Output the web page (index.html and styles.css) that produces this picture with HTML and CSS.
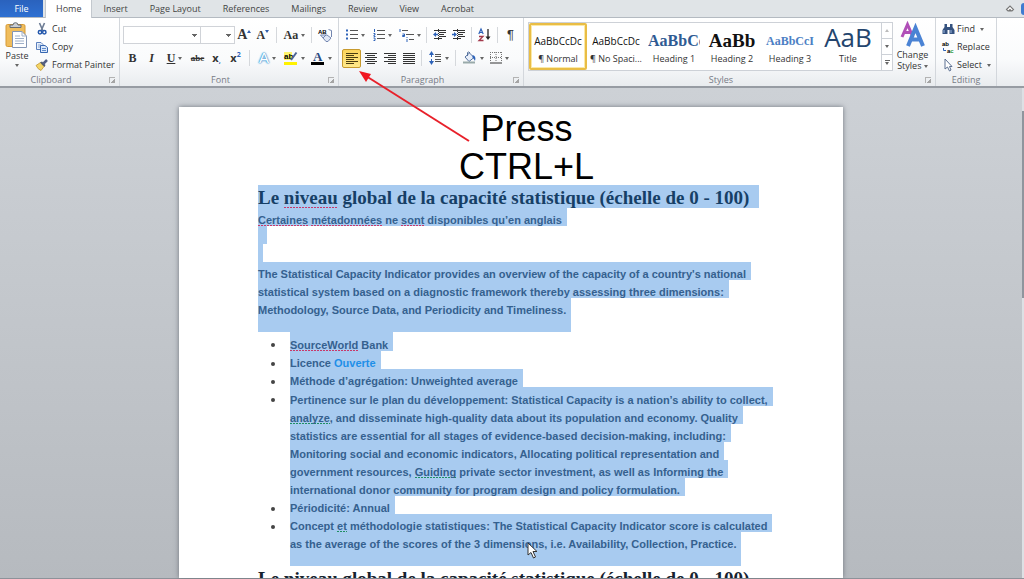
FILE: index.html
```html
<!DOCTYPE html>
<html lang="en">

<head>
  <meta charset="UTF-8">
  <meta name="viewport" content="width=device-width, initial-scale=1.0">
  <title>Align text left</title>
  <link rel="stylesheet" href="styles.css">
</head>

<body>
  <nav class="tabs">
    <button class="tab file">File</button>
    <button class="tab active">Home</button>
    <button class="tab">Insert</button>
    <button class="tab">Page Layout</button>
    <button class="tab">References</button>
    <button class="tab">Mailings</button>
    <button class="tab">Review</button>
    <button class="tab">View</button>
    <button class="tab">Acrobat</button>
    <div class="tabs-end">
      <button class="collapse" aria-label="Minimize the ribbon">
        <svg width="10" height="10" viewBox="0 0 10 10"><path d="M1.5 5.5 L5 2 L8.500 5.500 L7 7 H3 Z M3.500 7 L5 5.500 L6.500 7" fill="#fff" stroke="#777" stroke-width="1.100"/></svg>
      </button>
      <button class="help" aria-label="Help"></button>
    </div>
  </nav>

  <div class="ribbon">
    <section class="group clipboard">
      <div class="group-body">
        <button class="big">
          <svg width="24" height="27" viewBox="0 0 24 27">
            <rect x="1" y="2.500" width="19" height="22" rx="1.500" fill="#f0bd5c" stroke="#d79a35"/>
            <path d="M5 5.500 V3 H8 Q8 .7 10.500 .7 T13 3 H16 V5.500 Z" fill="#c9cdd2" stroke="#666c75"/>
            <path d="M7.500 9.500 H17 L21.500 14 V25.500 H7.500 Z" fill="#fff" stroke="#8496b5"/>
            <path d="M17 9.500 V14 H21.500 M10 14 H15 M10 16.500 H19 M10 19 H19 M10 21.500 H19" fill="none" stroke="#9fb0c9"/>
          </svg>
          <span>Paste</span>
          <i class="caret"></i>
        </button>
        <div class="stack">
          <button class="item">
            <svg width="12" height="12" viewBox="0 0 12 12"><path d="M3.500 0 L7 8 M8.500 0 L5 8" stroke="#6d7c94" stroke-width="1.600"/><circle cx="4" cy="9.300" r="1.700" fill="none" stroke="#2458ad" stroke-width="1.500"/><circle cx="8.300" cy="9.300" r="1.700" fill="none" stroke="#2458ad" stroke-width="1.500"/></svg>
            Cut
          </button>
          <button class="item">
            <svg width="12" height="12" viewBox="0 0 12 12"><path d="M.5 1.500 H5 L7 3.500 V8.500 H.5 Z" fill="#e8f0fb" stroke="#5c80bd"/><path d="M2 4 H5 M2 6 H5" stroke="#86a5d5"/><path d="M4.500 4.500 H9 L11.500 6.500 V11.500 H4.500 Z" fill="#dbe8fa" stroke="#3767b1"/><path d="M6 7.500 H10 M6 9.500 H10" stroke="#5f8bcb"/></svg>
            Copy
          </button>
          <button class="item">
            <svg width="12" height="12" viewBox="0 0 12 12"><path d="M0 6.500 L4.500 3.500 L8 7.500 L5 11.500 Q2 10.500 0 6.500" fill="#f4d566" stroke="#b98c25" stroke-width=".7"/><path d="M4 3.500 L8.500 8 L9.500 6 L6 2.500Z" fill="#555e70"/><path d="M7.500 4.500 L11 1" stroke="#535f85" stroke-width="2.500"/></svg>
            Format Painter
          </button>
        </div>
      </div>
      <footer><span>Clipboard</span><button class="launcher" aria-label="Clipboard options"></button></footer>
    </section>

    <section class="group font">
      <div class="group-body rows">
        <div class="row">
          <select class="combo family" aria-label="Font"><option></option></select>
          <select class="combo size" aria-label="Font size"><option></option></select>
          <button class="tool serif grow">A<svg width="4" height="9" viewBox="0 0 4 9"><path d="M0 3 L2 0 L4 3Z" fill="#2f5fae"/></svg></button>
          <button class="tool serif shrink">A<svg width="4" height="9" viewBox="0 0 4 9"><path d="M0 0 L2 3 L4 0Z" fill="#2f5fae"/></svg></button>
          <i class="sep"></i>
          <button class="split serif">Aa<i class="caret"></i></button>
          <i class="sep"></i>
          <button class="tool" aria-label="Clear formatting">
            <svg width="15" height="15" viewBox="0 0 15 15"><text x="0" y="6" class="tiny">AB</text><path d="M2.500 7 L9 7 L13 10 L10 13.500 H8 L5 10 Z" fill="#dfe6f4" stroke="#7386b0"/><path d="M5 10 L8 7 M10.500 1.500 L13.500 2.500 V9" fill="none" stroke="#7386b0"/></svg>
          </button>
        </div>
        <div class="row">
          <button class="tool serif"><b>B</b></button>
          <button class="tool serif"><em>I</em></button>
          <button class="split serif"><u>U</u><i class="caret"></i></button>
          <button class="tool serif small"><s>abc</s></button>
          <button class="tool sub">x<span>,</span></button>
          <button class="tool sup">x<span>2</span></button>
          <i class="sep"></i>
          <button class="split effects">A<i class="caret"></i></button>
          <button class="split" aria-label="Highlight colour">
            <svg width="14" height="15" viewBox="0 0 14 15"><rect y="11" width="13" height="3" fill="#fff200"/><rect y="1" width="8" height="8" fill="#fff56b"/><text x="0" y="8" class="mark">ab</text><path d="M7 9 L12.500 1.500" stroke="#4d6595" stroke-width="2"/></svg>
            <i class="caret"></i>
          </button>
          <button class="split" aria-label="Font colour">
            <svg width="14" height="15" viewBox="0 0 14 15"><text x="2" y="10" class="letter">A</text><rect x="0" y="11" width="13" height="3"/></svg>
            <i class="caret"></i>
          </button>
        </div>
      </div>
      <footer><span>Font</span><button class="launcher" aria-label="Font options"></button></footer>
    </section>

    <section class="group paragraph">
      <div class="group-body rows">
        <div class="row">
          <button class="split" aria-label="Bullets">
            <svg width="12" height="12" viewBox="0 0 12 12"><path d="M4 1.500 H12 M4 5.500 H12 M4 9.500 H12" stroke="#555"/><path d="M0 1.500 H2 M0 5.500 H2 M0 9.500 H2" stroke="#2d62b8" stroke-width="2"/></svg>
            <i class="caret"></i>
          </button>
          <button class="split" aria-label="Numbering">
            <svg width="12" height="12" viewBox="0 0 12 12"><path d="M4 1.500 H12 M4 5.500 H12 M4 9.500 H12" stroke="#555"/><path d="M1.500 0 V3 M.5 4.500 H2 V6 H1 V7.500 H2.500 M.5 9 H2 V11.500 H.5" fill="none" stroke="#2d62b8"/></svg>
            <i class="caret"></i>
          </button>
          <button class="split" aria-label="Multilevel list">
            <svg width="15" height="13" viewBox="0 0 15 13"><path d="M3 1.500 H9 M7 5.500 H15 M10 10.500 H15" stroke="#555"/><path d="M1 0 V3 M3.500 5 H5.500 V7.500 H3.500 V6.500 H5 M8 8 V9 M8 10 V13" fill="none" stroke="#2d62b8"/></svg>
            <i class="caret"></i>
          </button>
          <i class="sep"></i>
          <button class="tool" aria-label="Decrease indent">
            <svg width="13" height="12" viewBox="0 0 13 12"><path d="M1 1.500 H13 M6 3.500 H13 M6 5.500 H11 M6 7.500 H13 M1 9.500 H9" stroke="#333"/><path d="M0 5.500 L3 3 V8Z" fill="#2d62b8"/><path d="M2 5.500 H5" stroke="#2d62b8" stroke-width="1.500"/><path d="M5.500 0 V12" stroke="#333" stroke-dasharray="1 1"/></svg>
          </button>
          <button class="tool" aria-label="Increase indent">
            <svg width="13" height="12" viewBox="0 0 13 12"><path d="M1 1.500 H13 M6 3.500 H13 M6 5.500 H11 M6 7.500 H13 M1 9.500 H9" stroke="#333"/><path d="M5 5.500 L2 3 V8Z" fill="#2d62b8"/><path d="M0 5.500 H3" stroke="#2d62b8" stroke-width="1.500"/><path d="M5.500 0 V12" stroke="#333" stroke-dasharray="1 1"/></svg>
          </button>
          <i class="sep"></i>
          <button class="tool" aria-label="Sort">
            <svg width="13" height="14" viewBox="0 0 13 14"><path d="M.8 6 L3 1 L5.200 6 M1.500 4.500 H4.500" fill="none" stroke="#2d62b8" stroke-width="1.200"/><path d="M1 8.500 H5 L1 12.500 H5.500" fill="none" stroke="#a33a4d" stroke-width="1.300"/><path d="M10 1 V10" stroke="#222" stroke-width="1.300"/><path d="M7.500 8.500 H12.500 L10 12Z" fill="#222"/></svg>
          </button>
          <i class="sep"></i>
          <button class="tool pilcrow">¶</button>
        </div>
        <div class="row">
          <button class="tool on" aria-label="Align left">
            <svg width="12" height="11" viewBox="0 0 12 11"><path d="M0 .5 H12 M0 2.500 H8 M0 4.500 H12 M0 6.500 H8 M0 8.500 H12 M0 10.500 H8" stroke="#4a3d10"/></svg>
          </button>
          <button class="tool" aria-label="Center">
            <svg width="12" height="11" viewBox="0 0 12 11"><path d="M0 .5 H12 M2 2.500 H10 M0 4.500 H12 M2 6.500 H10 M0 8.500 H12 M2 10.500 H10" stroke="#333"/></svg>
          </button>
          <button class="tool" aria-label="Align right">
            <svg width="12" height="11" viewBox="0 0 12 11"><path d="M0 .5 H12 M4 2.500 H12 M0 4.500 H12 M4 6.500 H12 M0 8.500 H12 M4 10.500 H12" stroke="#333"/></svg>
          </button>
          <button class="tool" aria-label="Justify">
            <svg width="12" height="11" viewBox="0 0 12 11"><path d="M0 .5 H12 M0 2.500 H12 M0 4.500 H12 M0 6.500 H12 M0 8.500 H12 M0 10.500 H12" stroke="#333"/></svg>
          </button>
          <i class="sep"></i>
          <button class="split" aria-label="Line spacing">
            <svg width="13" height="14" viewBox="0 0 13 14"><path d="M6 3.500 H12 M6 5.500 H12 M6 8.500 H12 M6 10.500 H12" stroke="#555"/><path d="M0 4 L2.500 0 L5 4Z M0 10 L2.500 14 L5 10Z" fill="#2d62b8"/><path d="M2.500 3 V6 M2.500 8 V11" stroke="#2d62b8"/></svg>
            <i class="caret"></i>
          </button>
          <i class="sep"></i>
          <button class="split" aria-label="Shading">
            <svg width="15" height="14" viewBox="0 0 15 14"><path d="M3 6 L7.500 2 L12 6.500 L7 10.500Z" fill="#e9effa" stroke="#57739f"/><path d="M5.500 5 V1.500 Q7 0 8 2" fill="none" stroke="#57739f"/><path d="M10.500 4 Q14.500 5 13 10 Q11.500 7 10.500 6.500Z" fill="#2d62b8"/><path d="M1 11.500 H13" stroke="#9aa" stroke-width="2"/></svg>
            <i class="caret"></i>
          </button>
          <button class="split" aria-label="Borders">
            <svg width="12" height="12" viewBox="0 0 12 12"><path d="M.5 0 V10 M11.500 0 V10 M6 0 V10 M0 .5 H12 M0 5.500 H12" stroke="#777" stroke-dasharray="1 1"/><path d="M0 11 H12" stroke="#333"/></svg>
            <i class="caret"></i>
          </button>
        </div>
      </div>
      <footer><span>Paragraph</span><button class="launcher" aria-label="Paragraph options"></button></footer>
    </section>

    <section class="group styles">
      <div class="group-body">
        <div class="gallery">
          <button class="style chosen"><span class="sample">AaBbCcDc</span><span>¶ Normal</span></button>
          <button class="style"><span class="sample">AaBbCcDc</span><span>¶ No Spaci...</span></button>
          <button class="style"><span class="sample heading1">AaBbCc</span><span>Heading 1</span></button>
          <button class="style"><span class="sample heading2">AaBb</span><span>Heading 2</span></button>
          <button class="style"><span class="sample heading3">AaBbCcI</span><span>Heading 3</span></button>
          <button class="style"><span class="sample title">AaB</span><span>Title</span></button>
          <div class="gallery-scroll">
            <button aria-label="Up"><i class="caret up"></i></button>
            <button aria-label="Down"><i class="caret"></i></button>
            <button class="more" aria-label="More"><i class="caret"></i></button>
          </div>
        </div>
        <button class="big change">
          <svg width="26" height="26" viewBox="0 0 26 26"><path d="M2 15 L7.500 2.500 L13 15 M4 10.500 H11" fill="none" stroke="#b04fb8" stroke-width="3"/><path d="M8 24 L15.500 6 L23 24 M11 17.500 H20" fill="none" stroke="#4a83d4" stroke-width="4"/></svg>
          <span>Change<br>Styles <i class="caret"></i></span>
        </button>
      </div>
      <footer><span>Styles</span><button class="launcher" aria-label="Styles options"></button></footer>
    </section>

    <section class="group editing">
      <div class="group-body">
        <div class="stack">
          <button class="item">
            <svg width="13" height="12" viewBox="0 0 13 12"><path d="M2.500 1 H5 V4 H8 V1 H10.500 V4 L12.500 7 V11 H7.500 V7 H5.500 V11 H.5 V7 L2.500 4Z" fill="#35527f"/><path d="M2 7 V10 M9 7 V10" stroke="#9bb6df"/></svg>
            Find <i class="caret"></i>
          </button>
          <button class="item">
            <svg width="13" height="12" viewBox="0 0 13 12"><text x="0" y="5" class="tiny">ab</text><text x="5" y="12" class="tiny">a<tspan fill="#2f9a3c">c</tspan></text><path d="M1.500 7 V9.500 H4" fill="none" stroke="#2d62b8"/></svg>
            Replace
          </button>
          <button class="item">
            <svg width="13" height="12" viewBox="0 0 13 12"><path d="M3 0 V10 L5.500 8 L7.500 12 L9 11 L7.500 7.500 H10Z" fill="#fff" stroke="#5d7192"/></svg>
            Select <i class="caret"></i>
          </button>
        </div>
      </div>
      <footer><span>Editing</span></footer>
    </section>
  </div>

  <main class="workspace">
    <article class="page">
      <p class="caption">Press<br>CTRL+L</p>

      <h1><span class="sel">Le <span class="typo">niveau</span> global de la capacité statistique (échelle de 0 - 100)</span></h1>
      <p>
        <span class="sel"><span class="typo">Certaines</span> <span class="typo">métadonnées</span> ne <span class="typo">sont</span> disponibles qu’en anglais</span>
        <span class="sel blank"></span>
        <span class="sel blank narrow"></span>
      </p>
      <p>
        <span class="sel">The Statistical Capacity Indicator provides an overview of the capacity of a country's national</span>
        <span class="sel">statistical system based on a diagnostic framework thereby assessing three dimensions:</span>
        <span class="sel last">Methodology, Source Data, and Periodicity and Timeliness.</span>
      </p>
      <ul>
        <li><span class="sel"><span class="typo">SourceWorld</span> Bank</span></li>
        <li><span class="sel">Licence <a href="#">Ouverte</a></span></li>
        <li><span class="sel">Méthode d’agrégation: Unweighted average</span></li>
        <li>
          <span class="sel">Pertinence sur le plan du développement: Statistical Capacity is a nation’s ability to collect,</span>
          <span class="sel"><span class="grammar">analyze</span>, and disseminate high-quality data about its population and economy. Quality</span>
          <span class="sel">statistics are essential for all stages of evidence-based decision-making, including:</span>
          <span class="sel">Monitoring social and economic indicators, Allocating political representation and</span>
          <span class="sel">government resources, <span class="grammar">Guiding</span> private sector investment, as well as Informing the</span>
          <span class="sel">international donor community for program design and policy formulation.</span>
        </li>
        <li><span class="sel">Périodicité: Annual</span></li>
        <li>
          <span class="sel">Concept <span class="grammar">et</span> méthodologie statistiques: The Statistical Capacity Indicator score is calculated</span>
          <span class="sel last">as the average of the scores of the 3 dimensions, i.e. Availability, Collection, Practice.</span>
        </li>
      </ul>
      <h1 class="next">Le niveau global de la capacité statistique (échelle de 0 - 100)</h1>
    </article>
    <div class="scrollbar"><div class="thumb"></div></div>
  </main>

  <!-- pointer from the caption to the align left button -->
  <svg class="arrow" width="116" height="76" viewBox="0 0 116 76"><path d="M9 7 L112 72" stroke="#e8202a" stroke-width="2"/><path d="M2 2 L14 5 L9 13Z" fill="#f01620"/></svg>
  <svg class="cursor" width="11" height="17" viewBox="0 0 11 17"><path d="M1 1 V13 L4 10.500 L6.500 16 L8.500 15 L6 9.500 H10Z" fill="#fff" stroke="#333"/></svg>
</body>

</html>
```
FILE: styles.css
```css
* {
  box-sizing: border-box;
}

body {
  margin: 0;
  height: 100vh;
  display: flex;
  flex-direction: column;
  position: relative;
  overflow: hidden;
  font: 9px/12px "Open Sans", sans-serif;
  color: #333;
}

button {
  margin: 0;
  padding: 0;
  border: 0;
  background: none;
  font: inherit;
  color: inherit;
}

svg {
  flex: none;
  overflow: visible;
}

/* tabs */
.tabs {
  display: flex;
  flex: none;
  height: 18px;
  background: #e0e4e7;
  border-bottom: 1px solid #b4bac1;
}

.tab {
  height: 17px;
  padding: 0 11px;
  color: #444;
}

.file {
  width: 43px;
  margin-right: 2px;
  background: linear-gradient(#2a62bd, #2e70d2);
  color: #fff;
}

.active {
  height: 18px;
  padding: 0 10px;
  border: 1px solid #c3c8ce;
  border-width: 0 1px;
  background: #fff;
}

.tabs-end {
  display: flex;
  align-items: center;
  gap: 6px;
  margin-left: auto;
}

.collapse {
  height: 10px;
  display: flex;
}

.help {
  width: 3px;
  height: 12px;
  border-radius: 6px 0 0 6px;
  background: #3f7bd0;
}

/* ribbon */
.ribbon {
  display: flex;
  flex: none;
  height: 70px;
  background: linear-gradient(#fff, #fafbfc 60%, #e9ecef);
  border-bottom: 2px solid #979ca3;
}

.group {
  display: flex;
  flex-direction: column;
  flex: none;
  padding: 0 3px;
  border-right: 1px solid #d3d7dc;
}

.group-body {
  display: flex;
  flex: 1;
}

.group footer {
  display: flex;
  height: 13px;
  align-items: center;
  color: #777b86;
}

.group footer span {
  flex: 1;
  padding-right: 10px;
  text-align: center;
}

.group footer span:last-child {
  padding-right: 0;
}

.launcher {
  width: 6px;
  height: 6px;
  margin-right: 1px;
  border: 1px solid #b3b3b3;
  border-width: 1px 0 0 1px;
  background: linear-gradient(135deg, transparent 55%, #a5a5a5 55%);
}

.caret {
  display: inline-block;
  flex: none;
  border: 2px solid transparent;
  border-top: 3px solid #666;
  border-bottom: 0;
  vertical-align: middle;
}

.clipboard {
  width: 120px;
}

.big {
  display: flex;
  flex-direction: column;
  align-items: center;
  width: 28px;
  padding-top: 4px;
}

.big span {
  padding-top: 1px;
}

.big .caret {
  margin-top: 2px;
}

.stack {
  display: flex;
  flex-direction: column;
  padding: 2px 0 0 5px;
}

.item {
  display: flex;
  align-items: center;
  gap: 4px;
  height: 18px;
  white-space: nowrap;
}

.rows {
  flex-direction: column;
  padding-top: 8px;
  gap: 5px;
}

.row {
  display: flex;
  align-items: center;
  height: 18px;
}

.tool,
.split {
  display: flex;
  align-items: center;
  justify-content: center;
  width: 19px;
  height: 19px;
}

.split {
  width: 27px;
  gap: 3px;
}

.sep {
  width: 1px;
  height: 16px;
  margin: 0 3px;
  background: #d5d8dc;
}

.font {
  width: 219px;
}

.font .sep {
  margin: 0 4px;
}

.combo {
  appearance: none;
  height: 18px;
  border: 1px solid #d0d3d8;
  background:
    linear-gradient(#666, #666) no-repeat right 3px top 7px / 5px 1px,
    linear-gradient(#666, #666) no-repeat right 4px top 8px / 3px 1px,
    linear-gradient(#666, #666) no-repeat right 5px top 9px / 1px 1px,
    #fff;
}

.family {
  width: 80px;
}

.size {
  width: 35px;
  border-left: 0;
}

.serif {
  font: bold 12px/18px "Liberation Serif", serif;
}

.grow {
  font-size: 14px;
}

.grow svg,
.shrink svg {
  align-self: flex-start;
  margin-top: 4px;
}

.small {
  font-size: 9px;
}

.sub,
.sup {
  font: bold 11px/18px "Open Sans", sans-serif;
}

.sub span,
.sup span {
  font-size: 7px;
  color: #2d62b8;
}

.sub span {
  padding-top: 5px;
}

.sup span {
  padding-bottom: 7px;
}

.effects {
  font: 15px/18px "Liberation Sans", sans-serif;
  color: #fff;
  text-shadow: 0 0 1px #4f9fd8, 0 0 1px #4f9fd8, 0 0 2px #4f9fd8, 0 0 2px #4f9fd8;
}

.tiny {
  font: bold 6px "Liberation Sans", sans-serif;
}

.mark {
  font: bold 8px "Liberation Sans", sans-serif;
}

.letter {
  font: bold 13px "Liberation Serif", serif;
  fill: #2b4a80;
}

.paragraph {
  width: 185px;
}

.pilcrow {
  font: 13px/18px "Liberation Sans", sans-serif;
}

.on {
  border: 1px solid #c79a2e;
  border-radius: 2px;
  background: linear-gradient(#fbd45c, #ffe98a);
}

/* style gallery */
.styles {
  width: 412px;
}

.gallery {
  display: flex;
  height: 49px;
  margin: 4px 0 0 1px;
  border: 1px solid #cdd1d7;
  background: #fff;
}

.style {
  display: flex;
  flex-direction: column;
  align-items: center;
  width: 58px;
  padding: 0 1px;
  border: 2px solid transparent;
  white-space: nowrap;
}

.chosen {
  border-color: #e9bd45;
  border-radius: 2px;
  box-shadow: inset 0 0 0 1px #fbe9a8;
}

.sample {
  width: 100%;
  height: 28px;
  overflow: hidden;
  font-size: 10px;
  line-height: 32px;
  color: #111;
}

.heading1,
.heading2,
.heading3 {
  font-family: "Liberation Serif", serif;
  font-weight: bold;
}

.heading1 {
  font-size: 16px;
  color: #2f5b93;
}

.heading2 {
  font-size: 19px;
}

.heading3 {
  font-size: 12px;
  color: #4c80c4;
}

.title {
  font-size: 26px;
  line-height: 24px;
  color: #24456e;
}

.gallery-scroll {
  display: flex;
  flex-direction: column;
  width: 11px;
  margin-left: 4px;
  border-left: 1px solid #cdd1d7;
}

.gallery-scroll button {
  flex: 1;
  display: flex;
  flex-direction: column;
  align-items: center;
  justify-content: center;
  gap: 1px;
  border-bottom: 1px solid #cdd1d7;
}

.gallery-scroll button:last-child {
  border-bottom: 0;
}

.up {
  border-top: 0;
  border-bottom: 3px solid #bbb;
}

.more::before {
  content: "";
  width: 5px;
  height: 1px;
  background: #666;
}

.change {
  width: 40px;
  line-height: 11px;
}

.change .caret {
  margin: 0;
}

.editing {
  width: 61px;
}

.editing .stack {
  padding-left: 3px;
}

.editing .item {
  gap: 2px;
}

.editing .caret {
  margin-left: 3px;
}

/* document */
.workspace {
  display: flex;
  flex: 1;
  min-height: 0;
  background: linear-gradient(#cdd1d6, #b6babf);
  border-bottom: 1px solid #8d9299;
}

.page {
  width: 664px;
  max-width: 100%;
  margin: 19px auto 0;
  padding: 3px 70px 0 79px;
  background: #fff;
  box-shadow: 0 0 5px #6f757d;
  overflow: hidden;
  font: bold 11px/12px "Liberation Sans", sans-serif;
  color: #35618f;
  white-space: nowrap;
}

.page p {
  margin: 0;
}

.page .caption {
  height: 75px;
  padding-left: 22px;
  font-size: 36px;
  font-weight: normal;
  line-height: 38px;
  text-align: center;
  color: #000;
}

h1 {
  margin: 0;
  font: bold 19px/21px "Liberation Serif", serif;
  color: #163f66;
}

.next {
  padding-top: 2px;
  color: #15222e;
}

.sel {
  display: block;
  width: fit-content;
  padding: 6px 5px 0 0;
  background: #a8cbf0;
}

h1 .sel {
  padding: 2px 10px 0 0;
}

.blank {
  width: 9px;
  height: 18px;
}

.narrow {
  width: 5px;
}

.last {
  padding-bottom: 16px;
}

.typo,
.grammar {
  background: repeating-linear-gradient(90deg, #c8386a 0 2px, transparent 2px 3px) no-repeat left bottom / 100% 1px;
}

.grammar {
  background-image: repeating-linear-gradient(90deg, #1f8f63 0 2px, transparent 2px 3px);
}

ul {
  margin: 0;
  padding: 0 0 0 32px;
  list-style: none;
}

li::before {
  content: "";
  float: left;
  width: 4px;
  height: 4px;
  margin: 11px 0 0 -19px;
  border-radius: 2px;
  background: #444;
}

li:nth-child(3n + 1) .sel:first-child {
  padding-top: 7px;
}

li a {
  color: #1e8fe8;
  text-decoration: none;
}

.scrollbar {
  width: 2px;
  padding-top: 23px;
  background: #dde0e4;
}

.thumb {
  height: 40%;
  background: #8f959d;
}

.arrow {
  position: absolute;
  left: 357px;
  top: 69px;
}

.cursor {
  position: absolute;
  left: 527px;
  top: 542px;
}
```
